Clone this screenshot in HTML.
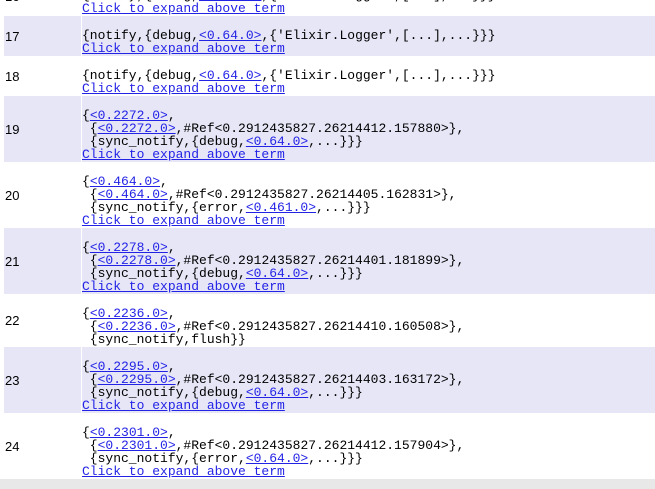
<!DOCTYPE html>
<html><head><meta charset="utf-8"><style>
html,body{margin:0;padding:0;width:655px;height:489px;overflow:hidden;background:#fff;}
table{position:absolute;top:-24px;left:4px;width:651px;border-collapse:collapse;}
td{padding:0 0 1px 0;height:39px;vertical-align:bottom;font:13px/13px "Liberation Mono",monospace;color:#000;white-space:pre;}
td.n{width:76px;font-family:"Liberation Sans",sans-serif;font-size:13px;padding:0 0 0 1px;height:40px;vertical-align:middle;border-right:1px solid #fff;}
tr.a td{background:#e6e6f7;}
tr.h3 td{height:52px}
tr.h3 td.n{height:53px}
tr.h4 td{height:65px}
tr.h4 td.n{height:66px}
a{color:#2323e6;text-decoration:underline;}
.sb{position:absolute;left:0;top:479px;width:655px;height:10px;background:#e8e8e8;}
</style></head><body>
<table>
<tr><td class="n">16</td><td>{notify,{debug,<a>&lt;0.64.0&gt;</a>,{'Elixir.Logger',[...],...}}}
<a>Click to expand above term</a></td></tr>
<tr class="a"><td class="n">17</td><td>{notify,{debug,<a>&lt;0.64.0&gt;</a>,{'Elixir.Logger',[...],...}}}
<a>Click to expand above term</a></td></tr>
<tr><td class="n">18</td><td>{notify,{debug,<a>&lt;0.64.0&gt;</a>,{'Elixir.Logger',[...],...}}}
<a>Click to expand above term</a></td></tr>
<tr class="a h4"><td class="n">19</td><td>{<a>&lt;0.2272.0&gt;</a>,
 {<a>&lt;0.2272.0&gt;</a>,#Ref&lt;0.2912435827.26214412.157880&gt;},
 {sync_notify,{debug,<a>&lt;0.64.0&gt;</a>,...}}}
<a>Click to expand above term</a></td></tr>
<tr class="h4"><td class="n">20</td><td>{<a>&lt;0.464.0&gt;</a>,
 {<a>&lt;0.464.0&gt;</a>,#Ref&lt;0.2912435827.26214405.162831&gt;},
 {sync_notify,{error,<a>&lt;0.461.0&gt;</a>,...}}}
<a>Click to expand above term</a></td></tr>
<tr class="a h4"><td class="n">21</td><td>{<a>&lt;0.2278.0&gt;</a>,
 {<a>&lt;0.2278.0&gt;</a>,#Ref&lt;0.2912435827.26214401.181899&gt;},
 {sync_notify,{debug,<a>&lt;0.64.0&gt;</a>,...}}}
<a>Click to expand above term</a></td></tr>
<tr class="h3"><td class="n">22</td><td>{<a>&lt;0.2236.0&gt;</a>,
 {<a>&lt;0.2236.0&gt;</a>,#Ref&lt;0.2912435827.26214410.160508&gt;},
 {sync_notify,flush}}</td></tr>
<tr class="a h4"><td class="n">23</td><td>{<a>&lt;0.2295.0&gt;</a>,
 {<a>&lt;0.2295.0&gt;</a>,#Ref&lt;0.2912435827.26214403.163172&gt;},
 {sync_notify,{debug,<a>&lt;0.64.0&gt;</a>,...}}}
<a>Click to expand above term</a></td></tr>
<tr class="h4"><td class="n">24</td><td>{<a>&lt;0.2301.0&gt;</a>,
 {<a>&lt;0.2301.0&gt;</a>,#Ref&lt;0.2912435827.26214412.157904&gt;},
 {sync_notify,{error,<a>&lt;0.64.0&gt;</a>,...}}}
<a>Click to expand above term</a></td></tr>
</table>
<div class="sb"></div>
</body></html>
